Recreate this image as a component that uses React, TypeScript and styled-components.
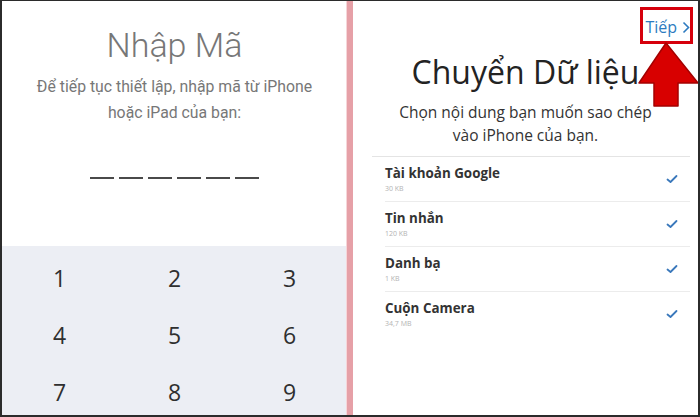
import React from 'react';
import styled, { createGlobalStyle } from 'styled-components';

const GlobalStyle = createGlobalStyle`
  html, body {
    margin: 0;
    padding: 0;
    background: #ffffff;
  }
  * {
    box-sizing: border-box;
  }
`;

const Frame = styled.div`
  width: 700px;
  height: 417px;
  display: flex;
  border: 2px solid #2b2b2b;
  border-top-width: 1px;
  background: #ffffff;
  overflow: hidden;
`;

const LeftPanel = styled.section`
  flex: 1;
  display: flex;
  flex-direction: column;
  align-items: center;
  padding-top: 24px;
  background: #ffffff;
`;

const Divider = styled.div`
  width: 6px;
  flex-shrink: 0;
  background: #e6a0a7;
  box-shadow: -1px 0 0 #f6d6d9, 1px 0 0 #f6d6d9;
`;

const RightPanel = styled.section`
  flex: 1;
  position: relative;
  display: flex;
  flex-direction: column;
  background: #ffffff;
`;

const CodeTitle = styled.h1`
  margin: 0;
  font-family: Roboto, 'Liberation Sans', sans-serif;
  font-weight: 300;
  font-size: 34px;
  line-height: 40px;
  color: #777777;
`;

const CodeHint = styled.p`
  margin: 9px 0 0;
  width: 290px;
  text-align: center;
  font-family: Roboto, 'Liberation Sans', sans-serif;
  font-size: 15.8px;
  line-height: 26px;
  color: #777777;
`;

const DashRow = styled.div`
  display: flex;
  gap: 5px;
  margin-top: 51px;
`;

const Dash = styled.span`
  width: 24px;
  height: 2px;
  background: #4a4a4a;
`;

const Keypad = styled.div`
  margin-top: auto;
  width: 100%;
  height: 169px;
  flex-shrink: 0;
  display: grid;
  grid-template-columns: repeat(3, 1fr);
  grid-auto-rows: 57px;
  padding-top: 3px;
  background: #eceef4;
  overflow: hidden;
`;

const Key = styled.div`
  display: flex;
  align-items: center;
  justify-content: center;
  font-family: 'Open Sans', 'Noto Sans', sans-serif;
  font-size: 23px;
  color: #2f2f2f;
`;

const Header = styled.header`
  height: 50px;
  display: flex;
  justify-content: flex-end;
  align-items: center;
  padding: 2px 8px 0 0;
`;

const NextButton = styled.button`
  display: flex;
  align-items: center;
  gap: 5px;
  border: none;
  background: none;
  padding: 0;
  font-family: 'Open Sans', 'Noto Sans', sans-serif;
  font-size: 16px;
  color: #2d7bc0;
`;

const Highlight = styled.div`
  position: absolute;
  left: 287px;
  top: 6px;
  width: 53px;
  height: 37px;
  border: 3px solid #d6000c;
`;

const Arrow = styled.svg`
  position: absolute;
  left: 285px;
  top: 41px;
`;

const Title = styled.h1`
  margin: 1px 0 0;
  text-align: center;
  font-family: 'Open Sans', 'Noto Sans', sans-serif;
  font-weight: 400;
  font-size: 32px;
  line-height: 40px;
  color: #232323;
`;

const Subtitle = styled.p`
  margin: 9px auto 0;
  width: 270px;
  text-align: center;
  font-family: 'Open Sans', 'Noto Sans', sans-serif;
  font-size: 15.5px;
  line-height: 23px;
  color: #333333;
`;

const List = styled.ul`
  list-style: none;
  margin: 9px 8px 0 19px;
  padding: 0;
  border-top: 1px solid #e4e4e4;
`;

const Row = styled.li<{ $last?: boolean }>`
  margin-left: 13px;
  height: 45px;
  display: flex;
  align-items: center;
  justify-content: space-between;
  padding: 0 12px 0 0;
  border-bottom: 1px solid ${p => (p.$last ? 'transparent' : '#ececec')};
`;

const RowText = styled.div`
  display: flex;
  flex-direction: column;
`;

const RowTitle = styled.span`
  font-family: 'Open Sans', 'Noto Sans', sans-serif;
  font-weight: 700;
  font-size: 13.4px;
  line-height: 20px;
  color: #333333;
`;

const RowSize = styled.span`
  font-family: 'Open Sans', 'Noto Sans', sans-serif;
  font-size: 7px;
  line-height: 12px;
  color: #b3b3b3;
`;

const Check = () => (
  <svg width="12" height="10" viewBox="0 0 12 10">
    <path d="M1.5 5.5 L4.5 8 L10.5 2" fill="none" stroke="#3a78bb" strokeWidth="1.8" strokeLinecap="round" strokeLinejoin="round" />
  </svg>
);

const keys = ['1', '2', '3', '4', '5', '6', '7', '8', '9'];

const items = [
  { name: 'Tài khoản Google', size: '30 KB' },
  { name: 'Tin nhắn', size: '120 KB' },
  { name: 'Danh bạ', size: '1 KB' },
  { name: 'Cuộn Camera', size: '34,7 MB' },
];

export default function App() {
  return (
    <>
      <GlobalStyle />
      <Frame>
        <LeftPanel>
          <CodeTitle>Nhập Mã</CodeTitle>
          <CodeHint>Để tiếp tục thiết lập, nhập mã từ iPhone hoặc iPad của bạn:</CodeHint>
          <DashRow>
            {Array.from({ length: 6 }).map((_, i) => (
              <Dash key={i} />
            ))}
          </DashRow>
          <Keypad>
            {keys.map(k => (
              <Key key={k}>{k}</Key>
            ))}
          </Keypad>
        </LeftPanel>
        <Divider />
        <RightPanel>
          <Header>
            <NextButton>
              Tiếp
              <svg width="8" height="13" viewBox="0 0 8 13">
                <path d="M1.5 1.5 L6.5 6.5 L1.5 11.5" fill="none" stroke="#2d7bc0" strokeWidth="1.6" />
              </svg>
            </NextButton>
          </Header>
          <Title>Chuyển Dữ liệu</Title>
          <Subtitle>Chọn nội dung bạn muốn sao chép vào iPhone của bạn.</Subtitle>
          <List>
            {items.map((it, i) => (
              <Row key={it.name} $last={i === items.length - 1}>
                <RowText>
                  <RowTitle>{it.name}</RowTitle>
                  <RowSize>{it.size}</RowSize>
                </RowText>
                <Check />
              </Row>
            ))}
          </List>
          <Highlight />
          <Arrow width="62" height="66" viewBox="0 0 62 66">
            <path d="M28 1 L60 41 L40 41 L40 64 L16 64 L16 41 L1 41 Z" fill="#d80000" stroke="#a40000" strokeWidth="1.5" strokeLinejoin="round" />
          </Arrow>
        </RightPanel>
      </Frame>
    </>
  );
}
